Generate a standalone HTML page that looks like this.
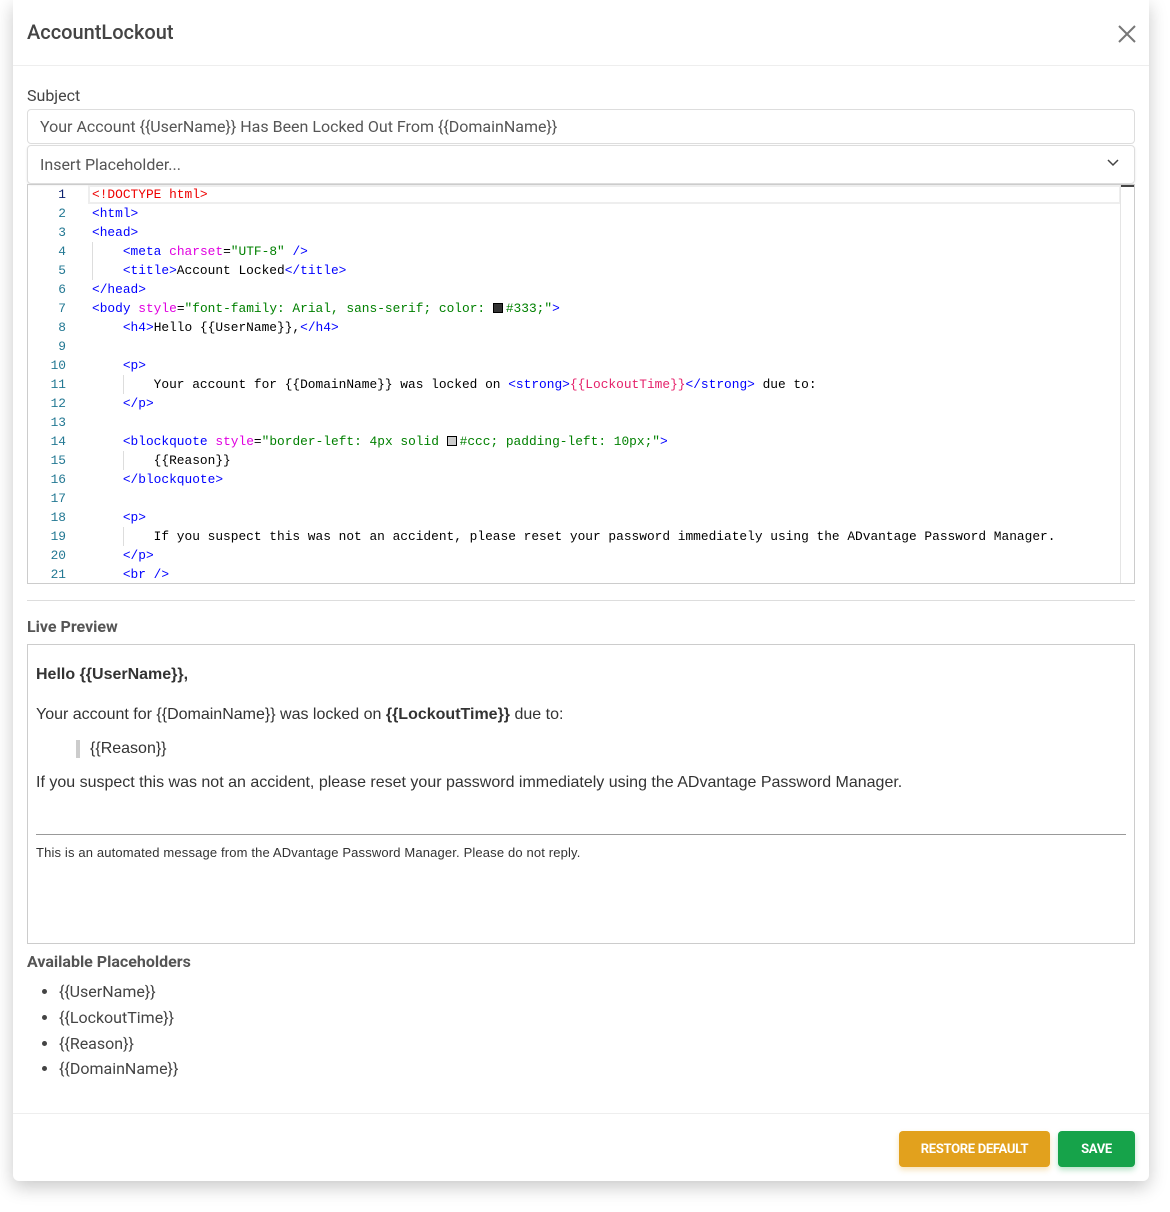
<!DOCTYPE html>
<html><head><style>
*{box-sizing:border-box;margin:0;padding:0}
body{width:1170px;height:1212px;background:#fff;font-family:Roboto,"Liberation Sans",sans-serif;color:#333;position:relative;overflow:hidden}
.modal{position:absolute;left:13px;top:0;width:1136px;height:1181px;background:#fff;border-radius:0 0 6px 6px;box-shadow:0 6px 18px rgba(0,0,0,.22)}
.a{position:absolute}
.title{left:14px;top:20px;font-size:20px;color:#444;font-weight:500}
.hd{left:0;top:65px;width:1136px;border-top:1px solid #eee}
.lbl{font-size:16px;color:#444}
.inp{border:1px solid #ddd;border-radius:4px;font-size:16px;color:#555;padding-left:12px;display:flex;align-items:center}
.ed{left:14px;top:184px;width:1108px;height:400px;border:1px solid #ccc;overflow:hidden;font-family:"Liberation Mono",monospace;font-size:12.85px}
.ln{position:absolute;left:0;width:38px;text-align:right;color:#237893;height:19px;line-height:19px}
.cd{position:absolute;left:64px;white-space:pre;height:19px;line-height:19px;color:#000}
.t{color:#00f}.r{color:#e00}.at{color:#e000e0}.s{color:#008000}.p{color:#e5226b}
.sw{display:inline-block;width:10px;height:10px;border:1px solid #000;vertical-align:-1px;margin-right:3px}
.pv{left:14px;top:644px;width:1108px;height:300px;border:1px solid #ccc;font-family:"Liberation Sans",Arial,sans-serif;color:#333}
.btn{top:1131px;height:36px;border-radius:4px;color:#fff;font-size:13px;font-weight:bold;display:flex;align-items:center;justify-content:center;letter-spacing:-.3px}
li{font-size:16px;color:#444;margin-bottom:6.8px}
</style></head><body>
<div class="modal">
<div class="a title">AccountLockout</div>
<svg class="a" style="left:1104px;top:24px" width="20" height="20" viewBox="0 0 20 20"><path d="M2 2L18 18M18 2L2 18" stroke="#777" stroke-width="2"/></svg>
<div class="a hd"></div>
<div class="a lbl" style="left:14px;top:86px">Subject</div>
<div class="a inp" style="left:14px;top:109px;width:1108px;height:35px">Your Account {{UserName}} Has Been Locked Out From {{DomainName}}</div>
<div class="a inp" style="left:14px;top:145px;width:1108px;height:39px;box-shadow:0 1px 2px rgba(0,0,0,.1)">Insert Placeholder...</div>
<svg class="a" style="left:1094px;top:158px" width="12" height="10" viewBox="0 0 12 10"><path d="M1 2L6 7L11 2" stroke="#444" stroke-width="1.5" fill="none"/></svg>
<div class="a ed">
<div class="a" style="left:60px;top:0;width:1033px;height:19px;border:2px solid #eee"></div>
<div class="a" style="left:1092px;top:0;width:14px;height:400px;border-left:1px solid #e5e5e5"></div>
<div class="a" style="left:1093px;top:0;width:13px;height:2px;background:#444"></div>
<div class="a" style="left:64px;top:57px;height:38px;border-left:1px solid #ddd"></div>
<div class="a" style="left:95px;top:190px;height:19px;border-left:1px solid #ddd"></div>
<div class="a" style="left:95px;top:266px;height:19px;border-left:1px solid #ddd"></div>
<div class="a" style="left:95px;top:342px;height:19px;border-left:1px solid #ddd"></div>
<div class="ln" style="top:0;color:#0b216f">1</div><div class="cd" style="top:0"><span class="r">&lt;!DOCTYPE html&gt;</span></div>
<div class="ln" style="top:19px">2</div><div class="cd" style="top:19px"><span class="t">&lt;html&gt;</span></div>
<div class="ln" style="top:38px">3</div><div class="cd" style="top:38px"><span class="t">&lt;head&gt;</span></div>
<div class="ln" style="top:57px">4</div><div class="cd" style="top:57px">    <span class="t">&lt;meta</span> <span class="at">charset</span>=<span class="s">"UTF-8"</span> <span class="t">/&gt;</span></div>
<div class="ln" style="top:76px">5</div><div class="cd" style="top:76px">    <span class="t">&lt;title&gt;</span>Account Locked<span class="t">&lt;/title&gt;</span></div>
<div class="ln" style="top:95px">6</div><div class="cd" style="top:95px"><span class="t">&lt;/head&gt;</span></div>
<div class="ln" style="top:114px">7</div><div class="cd" style="top:114px"><span class="t">&lt;body</span> <span class="at">style</span>=<span class="s">"font-family: Arial, sans-serif; color: <span class="sw" style="background:#333"></span>#333;"</span><span class="t">&gt;</span></div>
<div class="ln" style="top:133px">8</div><div class="cd" style="top:133px">    <span class="t">&lt;h4&gt;</span>Hello {{UserName}},<span class="t">&lt;/h4&gt;</span></div>
<div class="ln" style="top:152px">9</div>
<div class="ln" style="top:171px">10</div><div class="cd" style="top:171px">    <span class="t">&lt;p&gt;</span></div>
<div class="ln" style="top:190px">11</div><div class="cd" style="top:190px">        Your account for {{DomainName}} was locked on <span class="t">&lt;strong&gt;</span><span class="p">{{LockoutTime}}</span><span class="t">&lt;/strong&gt;</span> due to:</div>
<div class="ln" style="top:209px">12</div><div class="cd" style="top:209px">    <span class="t">&lt;/p&gt;</span></div>
<div class="ln" style="top:228px">13</div>
<div class="ln" style="top:247px">14</div><div class="cd" style="top:247px">    <span class="t">&lt;blockquote</span> <span class="at">style</span>=<span class="s">"border-left: 4px solid <span class="sw" style="background:#ccc"></span>#ccc; padding-left: 10px;"</span><span class="t">&gt;</span></div>
<div class="ln" style="top:266px">15</div><div class="cd" style="top:266px">        {{Reason}}</div>
<div class="ln" style="top:285px">16</div><div class="cd" style="top:285px">    <span class="t">&lt;/blockquote&gt;</span></div>
<div class="ln" style="top:304px">17</div>
<div class="ln" style="top:323px">18</div><div class="cd" style="top:323px">    <span class="t">&lt;p&gt;</span></div>
<div class="ln" style="top:342px">19</div><div class="cd" style="top:342px">        If you suspect this was not an accident, please reset your password immediately using the ADvantage Password Manager.</div>
<div class="ln" style="top:361px">20</div><div class="cd" style="top:361px">    <span class="t">&lt;/p&gt;</span></div>
<div class="ln" style="top:380px">21</div><div class="cd" style="top:380px">    <span class="t">&lt;br /&gt;</span></div>
</div>
<div class="a" style="left:14px;top:600px;width:1108px;border-top:1px solid #ddd"></div>
<div class="a lbl" style="left:14px;top:617px;font-weight:bold;color:#555">Live Preview</div>
<div class="a pv">
<div class="a" style="left:8px;top:21px;font-size:16px;font-weight:bold">Hello {{UserName}},</div>
<div class="a" style="left:8px;top:61px;font-size:16px">Your account for {{DomainName}} was locked on <b>{{LockoutTime}}</b> due to:</div>
<div class="a" style="left:48px;top:95px;font-size:16px;border-left:4px solid #ccc;padding-left:10px">{{Reason}}</div>
<div class="a" style="left:8px;top:129px;font-size:16px">If you suspect this was not an accident, please reset your password immediately using the ADvantage Password Manager.</div>
<div class="a" style="left:8px;top:189px;width:1090px;border-top:1px solid #999"></div>
<div class="a" style="left:8px;top:200px;font-size:13px;letter-spacing:.15px">This is an automated message from the ADvantage Password Manager. Please do not reply.</div>
</div>
<div class="a lbl" style="left:14px;top:952px;font-weight:bold;color:#555">Available Placeholders</div>
<ul class="a" style="left:46px;top:982px">
<li>{{UserName}}</li><li>{{LockoutTime}}</li><li>{{Reason}}</li><li>{{DomainName}}</li>
</ul>
<div class="a" style="left:0;top:1113px;width:1136px;border-top:1px solid #eee"></div>
<div class="a btn" style="left:886px;width:151px;background:#e2a11d;box-shadow:0 3px 6px rgba(226,161,29,.3)">RESTORE DEFAULT</div>
<div class="a btn" style="left:1045px;width:77px;background:#16a34a;box-shadow:0 3px 6px rgba(22,163,74,.3)">SAVE</div>
</div>
</body></html>
